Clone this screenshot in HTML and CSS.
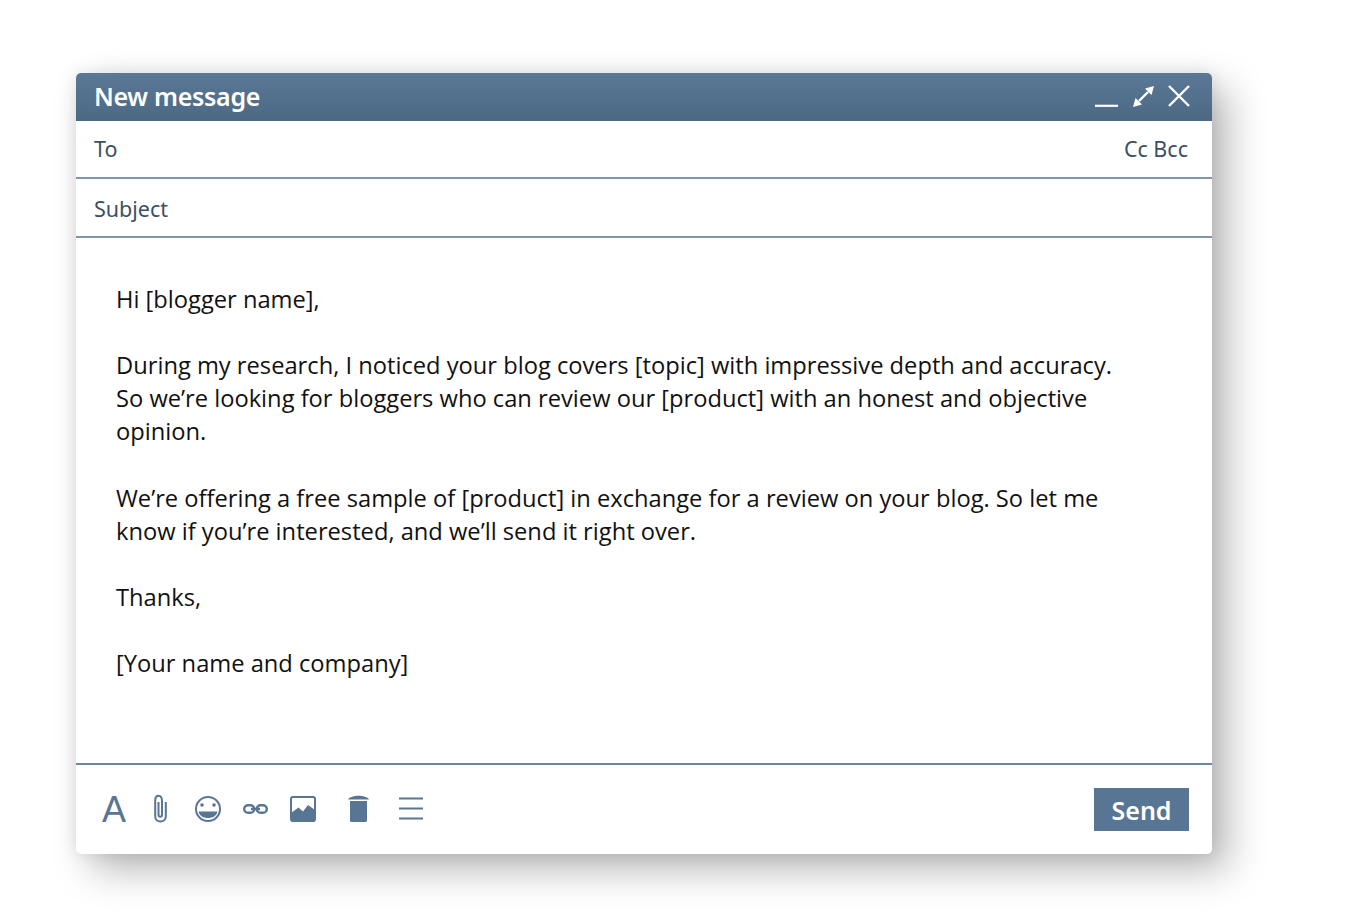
FILE: index.html
```html
<!DOCTYPE html>
<html>
<head>
    <meta charset="UTF-8">
    <title>New message</title>
    <link rel="stylesheet" href="styles.css">
</head>
<body>
<section class="composer">
    <header class="title-bar">
        <h1>New message</h1>
        <div class="window-icons">
            <svg class="icon-min" width="23" height="22" viewBox="0 0 23 22"><path d="M0 20.8h23" stroke="#fff" stroke-width="2.2"/></svg>
            <svg class="icon-expand" width="21" height="21" viewBox="0 0 21 21"><path d="M6 15L15 6" stroke="#fff" stroke-width="2.4"/><path d="M21 0l-2.500 9-6.500-6.500zM0 21l2.500-9 6.500 6.500z" fill="#fff"/></svg>
            <svg class="icon-close" width="22" height="22" viewBox="0 0 22 22"><path d="M1 1l20 20M21 1L1 21" stroke="#fff" stroke-width="2.400"/></svg>
        </div>
    </header>

    <div class="field field-to">
        <span>To</span>
        <span>Cc Bcc</span>
    </div>
    <div class="field field-subject">
        <span>Subject</span>
    </div>

    <div class="message">
        <p>Hi [blogger name],</p>
        <p>During my research, I noticed your blog covers [topic] with impressive depth and accuracy.<br>So we’re looking for bloggers who can review our [product] with an honest and objective<br>opinion.</p>
        <p>We’re offering a free sample of [product] in exchange for a review on your blog. So let me<br>know if you’re interested, and we’ll send it right over.</p>
        <p>Thanks,</p>
        <p>[Your name and company]</p>
    </div>

    <footer class="toolbar">
        <div class="tools">
            <span class="tool-font">A</span>
            <svg class="tool-clip" width="13" height="29" viewBox="0 0 13 29" fill="none" stroke="#587693" stroke-width="2"><path d="M11.800 8v14.500c0 6.500-10.600 6.500-10.600 0V6.500C1.200 0 8 0 8 6.500v14c0 3-3.500 3-3.500 0V8"/></svg>
            <svg class="tool-smile" width="26" height="26" viewBox="0 0 26 26"><circle cx="13" cy="13" r="12" fill="none" stroke="#587693" stroke-width="2"/><circle cx="7" cy="9" r="1.800" fill="#587693"/><circle cx="19" cy="9" r="1.800" fill="#587693"/><path d="M3.500 15.500h19c-1 4.500-5 6.500-9.500 6.500s-8.500-2-9.500-6.500z" fill="#587693"/></svg>
            <svg class="tool-link" width="25" height="10" viewBox="0 0 25 10" fill="none" stroke="#587693" stroke-width="2.400"><rect x="1.200" y="1.200" width="10" height="7.600" rx="3.800"/><rect x="13.800" y="1.200" width="10" height="7.600" rx="3.800"/><path d="M8 5h9"/></svg>
            <svg class="tool-image" width="26" height="26" viewBox="0 0 26 26"><rect x="1" y="1" width="24" height="24" rx="2" fill="none" stroke="#587693" stroke-width="2"/><path d="M1 17l7.500-5.500 4.500 4 5-6.500 7 5v10a2 2 0 0 1-2 2H3a2 2 0 0 1-2-2z" fill="#587693"/></svg>
            <svg class="tool-trash" width="21" height="27" viewBox="0 0 21 27"><path d="M0 4.500C1 2.500 3 2 5 1.500 6 .5 15 .5 16 1.500c2 .5 4 1 5 3z" fill="#587693"/><path d="M2 6h17v19.500a1.500 1.500 0 0 1-1.500 1.500h-14A1.500 1.500 0 0 1 2 25.500z" fill="#587693"/></svg>
            <svg class="tool-menu" width="24" height="23" viewBox="0 0 24 23" stroke="#587693" stroke-width="2.200"><path d="M0 1.500h24M0 11.500h24M0 21.500h24"/></svg>
        </div>
        <button class="send">Send</button>
    </footer>
</section>
</body>
</html>
```
FILE: styles.css
```css
html, body {
    height: 100%;
    margin: 0;
}

body {
    background-color: #ffffff;
    font-family: "Open Sans", sans-serif;
    padding: 73px 0 0 76px;
    box-sizing: border-box;
    overflow: hidden;
}

.composer {
    display: flex;
    flex-flow: column;
    width: 1136px;
    height: 781px;
    background-color: #ffffff;
    border-radius: 5px;
    box-shadow: 16px 16px 38px rgba(0, 0, 0, 0.28), 0 0 18px rgba(0, 0, 0, 0.1);
}

.title-bar {
    display: flex;
    justify-content: space-between;
    align-items: center;
    height: 46px;
    padding: 0 22px 2px 18px;
    background: linear-gradient(#5a7997, #4c6883);
    border-radius: 5px 5px 0 0;
}

.title-bar h1 {
    margin: 0;
    color: #ffffff;
    font-family: "Noto Sans", sans-serif;
    font-size: 25px;
    font-weight: 600;
    font-stretch: 87%;
    letter-spacing: -0.3px;
}

.window-icons {
    display: flex;
    align-items: center;
}

.icon-expand {
    margin: 0 14px 0 15px;
}

.field {
    display: flex;
    justify-content: space-between;
    align-items: center;
    padding: 0 24px 2px 18px;
    color: #3d4f63;
    font-family: "Noto Sans", sans-serif;
    font-size: 21.5px;
    font-stretch: 87%;
    border-bottom: 2px solid #7f97ab;
}

.field-to {
    height: 54px;
}

.field-subject {
    height: 55px;
    padding-top: 2px;
    padding-bottom: 0;
}

.message {
    flex: 1;
    padding: 45px 0 0 40px;
    color: #111111;
    font-size: 23.7px;
    line-height: 33.1px;
    border-bottom: 2px solid #6d879f;
}

.message p {
    margin: 0 0 33.1px;
}

.toolbar {
    display: flex;
    justify-content: space-between;
    align-items: center;
    height: 89px;
    padding: 0 23px 0 26px;
}

.tools {
    display: flex;
    align-items: center;
    padding-bottom: 2px;
}

.tool-font {
    width: 24px;
    margin-top: 2px;
    color: #587693;
    font-family: "Liberation Sans", sans-serif;
    font-size: 36px;
    line-height: 36px;
}

.tool-clip {
    margin-left: 28px;
}

.tool-smile {
    margin-left: 28px;
}

.tool-link {
    margin-left: 22px;
}

.tool-image {
    margin-left: 22px;
}

.tool-trash {
    margin-left: 32px;
}

.tool-menu {
    margin-left: 30px;
}

.send {
    width: 95px;
    height: 43px;
    padding: 0;
    color: #ffffff;
    font-family: "Noto Sans", sans-serif;
    font-size: 25px;
    font-weight: 600;
    font-stretch: 87%;
    background-color: #587693;
    border: 0;
}
```
